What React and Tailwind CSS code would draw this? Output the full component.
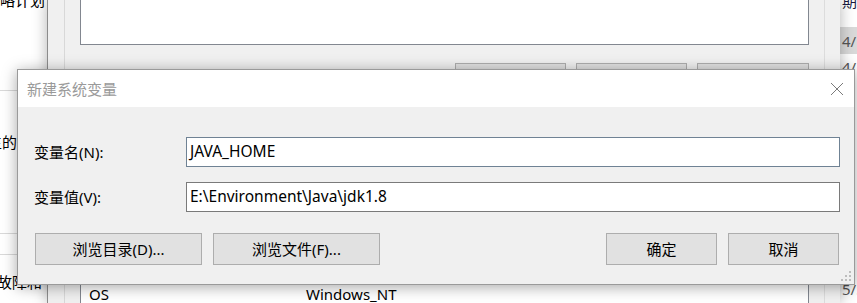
export default function App() {
  return (
    <div className="relative flex w-[857px] h-[303px] overflow-hidden bg-white font-['Noto_Sans','Noto_Sans_CJK_SC',sans-serif] text-black">
      {/* left background window */}
      <div className="w-[47px] shrink-0 h-full bg-white flex flex-col overflow-hidden text-[15px] leading-[18px]">
        <div className="flex justify-end mt-[-9px] pr-[2px] whitespace-nowrap">组策略计划</div>
        <div className="h-px mt-[81px] bg-[#d9d9d9]" />
        <div className="mt-[42px] ml-[-28px] whitespace-nowrap">发生的</div>
        <div className="h-px mt-[82px] bg-[#d9d9d9]" />
        <div className="h-px mt-[20px] bg-[#d9d9d9]" />
        <div className="mt-[18px] ml-[-3px] whitespace-nowrap">故障和</div>
      </div>

      {/* middle background window */}
      <div className="relative z-10 w-[793px] shrink-0 h-full bg-[#f0f0f0] border-l border-[#8c8c8c] shadow-[0_0_14px_rgba(0,0,0,0.3)] flex">
        <div className="w-[16px] shrink-0" />
        <div className="w-px shrink-0 bg-[#d8d8d8]" />
        <div className="w-[729px] shrink-0 ml-[15px] flex flex-col">
          <div className="h-[45px] bg-white border-x border-b border-[#828790]" />
          <div className="flex justify-end gap-[10px] mt-[18px]">
            <div className="w-[111px] h-[24px] bg-[#e1e1e1] border border-[#adadad]" />
            <div className="w-[111px] h-[24px] bg-[#e1e1e1] border border-[#adadad]" />
            <div className="w-[112px] h-[24px] bg-[#e1e1e1] border border-[#adadad]" />
          </div>
          <div className="mt-auto h-[33px] bg-white border-x border-[#828790] flex pt-[15px] text-[15px] leading-[18px]">
            <span className="w-[225px] pl-[8px]">OS</span>
            <span>Windows_NT</span>
          </div>
        </div>
        <div className="w-px shrink-0 ml-[15px] bg-[#dcdcdc]" />
      </div>

      {/* right background window */}
      <div className="flex-1 h-full bg-white flex flex-col overflow-hidden text-[15px] leading-[18px] whitespace-nowrap">
        <div className="mt-[-8px] pl-[2px] text-[#1a1a40]">期</div>
        <div className="h-[27px] mt-[17px] bg-[#d9d9d9] flex items-center pl-[2px] text-[#555]">4/1</div>
        <div className="mt-[4px] pl-[2px] text-[#555]">4/1</div>
        <div className="mt-auto mb-[5px] pl-[2px] text-[#555]">5/5</div>
      </div>

      {/* dialog window */}
      <div className="absolute z-20 left-[17px] top-[69px] w-[838px] h-[216px] border border-[#9a9a9a] bg-[#f0f0f0] shadow-[0_2px_14px_rgba(0,0,0,0.35)] flex flex-col">
        <div className="h-[37px] bg-white flex items-center justify-between pl-[9px] pr-[10px]">
          <span className="text-[15px] leading-[18px] text-[#9a9a9a]">新建系统变量</span>
          <svg width="14" height="14" viewBox="0 0 14 14">
            <path d="M1 1L13 13M13 1L1 13" stroke="#7a7a7a" strokeWidth="1" />
          </svg>
        </div>
        <div className="relative flex-1 flex flex-col pl-[16px] pr-[14px] pt-[30px]">
          <div className="flex items-center h-[30px]">
            <span className="w-[152px] text-[15px] leading-[18px]">变量名(N):</span>
            <div className="flex-1 h-full bg-white border border-[#6f8294] flex items-center px-[3px] text-[15.5px]">JAVA_HOME</div>
          </div>
          <div className="flex items-center h-[30px] mt-[15px]">
            <span className="w-[152px] text-[15px] leading-[18px]">变量值(V):</span>
            <div className="flex-1 h-full bg-white border border-[#7a7a7a] flex items-center px-[3px] text-[15.5px]">E:\Environment\Java\jdk1.8</div>
          </div>
          <div className="flex justify-between h-[32px] mt-[21px] px-[1px]">
            <div className="flex gap-[11px]">
              <button className="w-[167px] h-full bg-[#e1e1e1] border border-[#adadad] text-[15px]">浏览目录(D)...</button>
              <button className="w-[167px] h-full bg-[#e1e1e1] border border-[#adadad] text-[15px]">浏览文件(F)...</button>
            </div>
            <div className="flex gap-[11px]">
              <button className="w-[111px] h-full bg-[#e1e1e1] border border-[#adadad] text-[15px]">确定</button>
              <button className="w-[111px] h-full bg-[#e1e1e1] border border-[#adadad] text-[15px]">取消</button>
            </div>
          </div>
          <svg className="absolute right-[1px] bottom-[1px]" width="12" height="12" viewBox="0 0 12 12">
            <rect x="8" y="0" width="2" height="2" fill="#bdbdbd" />
            <rect x="4" y="4" width="2" height="2" fill="#bdbdbd" />
            <rect x="8" y="4" width="2" height="2" fill="#bdbdbd" />
            <rect x="0" y="8" width="2" height="2" fill="#bdbdbd" />
            <rect x="4" y="8" width="2" height="2" fill="#bdbdbd" />
            <rect x="8" y="8" width="2" height="2" fill="#bdbdbd" />
          </svg>
        </div>
      </div>
    </div>
  );
}
